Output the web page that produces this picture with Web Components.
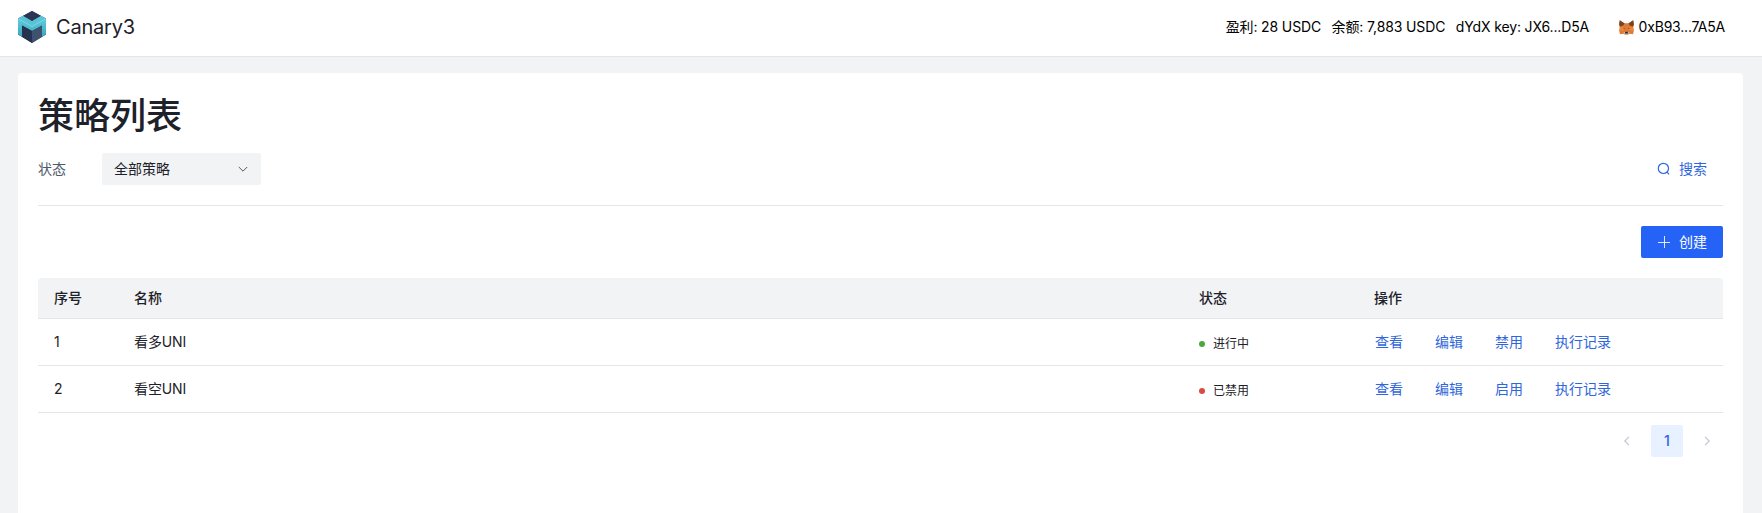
<!DOCTYPE html>
<html lang="zh-CN">
<head>
<meta charset="utf-8">
<title>Canary3</title>
<style>
html,body{height:100%}
body{margin:0;overflow:hidden;background:#f2f3f5;color:#1d2129;font:14px/22px Inter,"Noto Sans CJK SC",sans-serif}
</style>
</head>
<body>
<app-shell></app-shell>
<script>
const define = (name, html) => customElements.define(name, class extends HTMLElement {
  constructor() {
    super();
    const t = document.createElement('template');
    t.innerHTML = html;
    this.attachShadow({mode: 'open'}).append(t.content.cloneNode(true));
  }
});

define('brand-logo', `<style>:host{display:block;width:28px;height:32px}svg{display:block}</style>
<svg width="28" height="32" viewBox="0 0 28 32">
<defs><linearGradient id="a" x1="0" x2="0" y1="0" y2="1"><stop offset="0" stop-color="#64d4e2"/><stop offset="1" stop-color="#3ba5be"/></linearGradient></defs>
<path d="M14 0 28 7.6v16L14 32 0 23.6v-16z" fill="#2b3a55"/>
<path d="M14 0 23.5 5.2 14 10.3 4.5 5.2z" fill="#2a3652"/>
<path d="M0 7.7 5 5 14 10.2 23 5l5 2.7v15.7l-4 2.3V14.5L14 20 4 14.6v11.1L0 23.4z" fill="url(#a)"/>
<path d="M0 7.7 5 5 14 10.2 23 5l5 2.7L14 15.7z" fill="#58c4d6"/>
<path d="M.8 8 14 15.6 27.2 8" fill="none" stroke="#8be0ea" stroke-width=".7"/>
<path d="M4 14.6 14 20v12L4 25.8z" fill="#26334e"/>
<path d="M24 14.6 14 20v12l10-6.2z" fill="#3e5270"/>
</svg>`);

define('fox-icon', `<style>:host{display:block;width:15px;height:15px}svg{display:block}</style>
<svg width="15" height="15" viewBox="0 0 15 15">
<path d="M.8.2 5.4 3.2h4.2L14.2.2l.7 4.4-.6 3.2.5 2.9-.8 3.5-3.4-.5-1.8 1.1H6.2l-1.8-1.1-3.4.5-.8-3.5.5-2.9-.6-3.2z" fill="#df7a35"/>
<path d="M.8.2 5.6 3.6 4.2 5.5 1.2 6.6.1 4.5zM14.2.2 9.4 3.6l1.4 1.9 3 1.1 1.1-2.1z" fill="#744429"/>
<path d="m1 7.3 3.7.3.4 2.8-4.9.1zm13 0-3.7.3-.4 2.8 4.9.1z" fill="#e88a42"/>
<path d="M3.8 8.1 6 9 5.5 7.9zm7.4 0L9 9l.5-1.1z" fill="#704332"/>
<path d="m4.4 12.4 2-.7h2.2l2 .7-2 2.2H6.4z" fill="#d1b9a6"/>
<path d="M6.3 11.8h2.4l.3 1.6H6z" fill="#29242a"/>
</svg>`);

define('app-header', `<style>
:host{display:flex;box-sizing:border-box;height:57px;padding:0 37px 2px 18px;align-items:center;background:#fff;border-bottom:1px solid #e5e6eb;flex:none}
.name{font-size:20px;letter-spacing:-.2px;margin-left:10px;flex:1}
.info{display:flex;color:#000;white-space:nowrap;letter-spacing:-.13px}
.info span+span{margin-left:10.5px}
fox-icon{margin:0 5px 0 29.5px}
.key{color:#000;letter-spacing:-.2px}
</style><brand-logo></brand-logo><div class="name">Canary3</div>
<div class="info"><span>盈利: 28 USDC</span><span>余额: 7,883 USDC</span><span>dYdX key: JX6...D5A</span></div>
<fox-icon></fox-icon><div class="key">0xB93...7A5A</div>`);

define('filter-bar', `<style>
:host{display:flex;align-items:center;height:32px;padding-bottom:20px;border-bottom:1px solid #e5e6eb}
.label{width:64px;color:#4e5969}
.select{display:flex;align-items:center;justify-content:space-between;box-sizing:border-box;width:159px;height:32px;padding:0 12px;background:#f2f3f5;border-radius:2px}
.search{display:flex;align-items:center;margin-left:auto;padding-right:16px;color:#2f66db;gap:9px}
svg{display:block;fill:none}
</style><div class="label">状态</div>
<div class="select">全部策略<svg width="12" height="12" viewBox="0 0 12 12" stroke="#4e5969"><path d="m1.8 4 4.2 4.2L10.2 4"/></svg></div>
<div class="search"><svg width="13" height="14" viewBox="0 0 13 14" stroke="currentColor" stroke-width="1.2"><circle cx="6.4" cy="6.4" r="5.1"/><path d="m9.9 9.9 2.2 2.4"/></svg>搜索</div>`);

define('create-button', `<style>
:host{display:flex;align-items:center;box-sizing:border-box;width:82px;height:32px;padding-left:16px;gap:9px;background:#2563f6;color:#fff;border-radius:2px;margin:20px 0 20px auto}
svg{display:block}
</style><svg width="13" height="12" viewBox="0 0 13 12" stroke="#fff" stroke-opacity=".85"><path d="M1 6.5h12M7.5 0v12"/></svg><slot></slot>`);

const COLS = 'display:grid;grid-template-columns:80px 1065px 175px 1fr;align-items:center;box-sizing:border-box;border-bottom:1px solid #e5e6eb;padding-left:16px';
define('table-head', `<style>:host{${COLS};height:41px;background:#f2f3f5;font-weight:500;border-radius:4px 4px 0 0}</style>
<span>序号</span><span>名称</span><span>状态</span><span>操作</span>`);
define('table-row', `<style>:host{${COLS};height:47px}
::slotted([slot=name]){letter-spacing:-.12px}
.links{display:flex;gap:32px;padding-left:1px;color:#2f66db}</style>
<slot name="no"></slot><slot name="name"></slot><slot name="status"></slot><div class="links"><slot></slot></div>`);
define('status-badge', `<style>:host{display:flex;align-items:center;font-size:12px;padding-top:3px}
i{width:6px;height:6px;border-radius:50%;margin-right:8px;background:#4aa83f}
:host([off]) i{background:#d94a43}</style><i></i><slot></slot>`);
define('page-nav', `<style>
:host{display:flex;justify-content:flex-end;margin-top:12px;gap:8px}
span{display:flex;width:32px;height:32px;align-items:center;justify-content:center;border-radius:2px}
.on{background:#e8f1ff;color:#2f66db;font-weight:500}
svg{fill:none;stroke:#c2c7d0;stroke-width:1.2}
</style><span><svg width="12" height="12"><path d="M8 1.8 3.8 6 8 10.2"/></svg></span><span class="on">1</span><span><svg width="12" height="12"><path d="M4 1.8 8.2 6 4 10.2"/></svg></span>`);

define('strategy-card', `<style>
:host{display:block;box-sizing:border-box;flex:1;margin:16px 19px 0 18px;padding:21px 20px 0;background:#fff;border-radius:4px 4px 0 0}
h1{margin:0 0 15px;font-size:36px;line-height:44px;font-weight:500}
</style><h1>策略列表</h1><filter-bar></filter-bar><create-button>创建</create-button>
<table-head></table-head>
<table-row><span slot="no">1</span><span slot="name">看多UNI</span><status-badge slot="status">进行中</status-badge><span>查看</span><span>编辑</span><span>禁用</span><span>执行记录</span></table-row>
<table-row><span slot="no">2</span><span slot="name">看空UNI</span><status-badge slot="status" off>已禁用</status-badge><span>查看</span><span>编辑</span><span>启用</span><span>执行记录</span></table-row>
<page-nav></page-nav>`);

define('app-shell', `<style>:host{display:flex;flex-direction:column;height:100vh}</style><app-header></app-header><strategy-card></strategy-card>`);
</script>
</body>
</html>
